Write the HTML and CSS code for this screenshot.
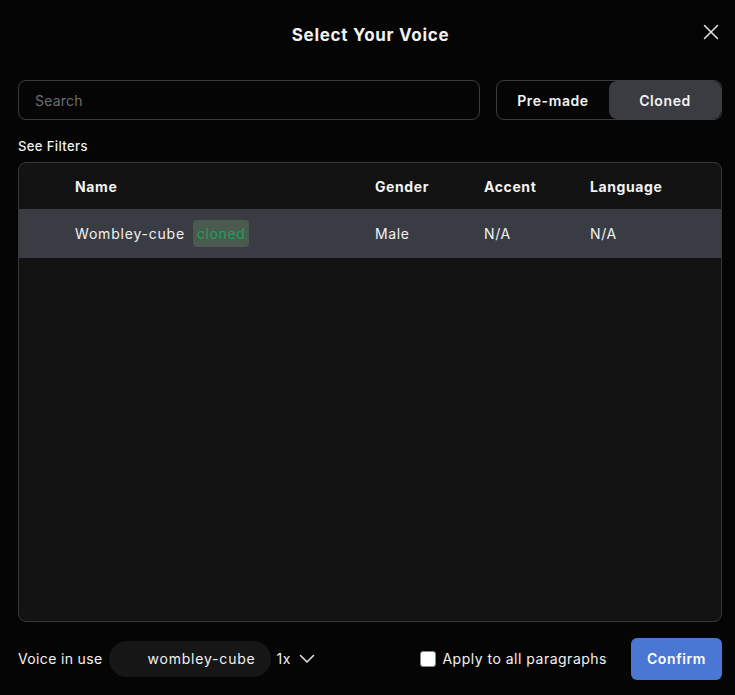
FILE: index.html
```html
<!DOCTYPE html>
<html>
<head>
<meta charset="utf-8">
<link rel="stylesheet" href="styles.css">
</head>
<body>
<div class="modal">
  <header class="top">
    <h1 class="title">Select Your Voice</h1>
    <button class="close" aria-label="Close">
      <svg width="16" height="16" viewBox="0 0 16 16"><path d="M1.5 1.5 L14.5 14.5 M14.5 1.5 L1.5 14.5" stroke="#e6e6e6" stroke-width="1.5" fill="none" stroke-linecap="round"/></svg>
    </button>
  </header>
  <div class="controls">
    <div class="search">Search</div>
    <div class="toggle">
      <div class="tab">Pre-made</div>
      <div class="tab active">Cloned</div>
    </div>
  </div>
  <div class="filters">See Filters</div>
  <div class="table">
    <div class="row head">
      <div class="c name">Name</div>
      <div class="c gender">Gender</div>
      <div class="c accent">Accent</div>
      <div class="c lang">Language</div>
    </div>
    <div class="row sel">
      <div class="c name">Wombley-cube <span class="badge">cloned</span></div>
      <div class="c gender">Male</div>
      <div class="c accent">N/A</div>
      <div class="c lang">N/A</div>
    </div>
  </div>
  <footer class="bottom">
    <div class="inuse">
      <span class="label">Voice in use</span>
      <span class="pill">wombley-cube</span>
      <span class="speed">1x</span>
      <svg class="chev" width="16" height="10" viewBox="0 0 16 10"><path d="M1.5 1.5 L8 8 L14.5 1.5" stroke="#e6e6e6" stroke-width="1.5" fill="none" stroke-linecap="round" stroke-linejoin="round"/></svg>
    </div>
    <div class="actions">
      <label class="apply"><span class="box"></span>Apply to all paragraphs</label>
      <button class="confirm">Confirm</button>
    </div>
  </footer>
</div>
</body>
</html>
```
FILE: styles.css
```css
html, body { margin: 0; padding: 0; }
body {
  background: #050505;
  color: #f2f2f2;
  font-family: Inter, "Open Sans", sans-serif;
  letter-spacing: 0.6px;
  width: 735px;
  height: 695px;
  overflow: hidden;
}
.modal { padding: 0 13px 0 18px; display: flex; flex-direction: column; }
.top { height: 69px; display: flex; align-items: center; justify-content: center; position: relative; }
.title { margin: 0; font-size: 17px; font-weight: 700; letter-spacing: 0.7px; padding-left: 1px; padding-top: 1px; }
.close { position: absolute; right: 3px; top: 24px; background: none; border: none; padding: 0; width: 16px; height: 16px; display: flex; }
.controls { margin-top: 11px; display: flex; gap: 16px; height: 40px; }
.search {
  width: 462px; box-sizing: border-box; border: 1px solid #3c3c3c; border-radius: 8px;
  display: flex; align-items: center; padding-left: 16px; color: #6c6e76; font-size: 14px; letter-spacing: 0.2px;
}
.toggle {
  width: 226px; box-sizing: border-box; border: 1px solid #3c3c3c; border-radius: 8px;
  display: flex; overflow: hidden;
}
.tab { flex: 1; display: flex; align-items: center; justify-content: center; font-size: 14px; font-weight: 600; color: #f2f2f2; }
.tab.active { background: #3a3c42; flex: 0 0 112px; border-radius: 8px; }
.filters { margin-top: 18px; font-size: 13px; font-weight: 500; height: 24px; line-height: 16px; letter-spacing: 0.4px; }
.table {
  width: 704px; height: 460px; box-sizing: border-box; background: #121212;
  border: 1px solid #383838; border-radius: 8px; overflow: hidden;
}
.row { display: flex; align-items: center; font-size: 14px; }
.row.head { height: 46px; font-weight: 700; font-size: 14px; }
.row.sel { height: 49px; background: #393c43; }
.c { box-sizing: border-box; }
.name { width: 356px; padding-left: 56px; display: flex; align-items: center; gap: 8px; }
.row.sel .name { letter-spacing: 0.8px; }
.gender { width: 109px; }
.accent { width: 106px; }
.lang { flex: 1; }
.badge {
  background: #4b5a4e; color: #17a05a; border-radius: 4px; padding: 0 4px;
  height: 27px; line-height: 27px; font-size: 14px; letter-spacing: 0.6px;
}
.bottom { height: 73px; display: flex; align-items: center; justify-content: space-between; }
.inuse { display: flex; align-items: center; font-size: 14px; }
.label { margin-right: 7px; letter-spacing: 0.35px; }
.pill { background: #161616; border-radius: 18px; height: 36px; line-height: 36px; padding: 0 15px 0 38px; letter-spacing: 0.8px; }
.speed { margin-left: 6px; }
.chev { margin-left: 8px; }
.actions { display: flex; align-items: center; gap: 24px; }
.apply { display: flex; align-items: center; font-size: 14px; gap: 6px; letter-spacing: 0.5px; }
.box { width: 14px; height: 14px; background: #fff; border-radius: 3px; border: 1px solid #888; }
.confirm {
  background: #4a76d4; color: #fff; border: none; border-radius: 6px; width: 91px; height: 42px;
  font-family: inherit; font-size: 14px; font-weight: 600; letter-spacing: 0.6px;
}
```
